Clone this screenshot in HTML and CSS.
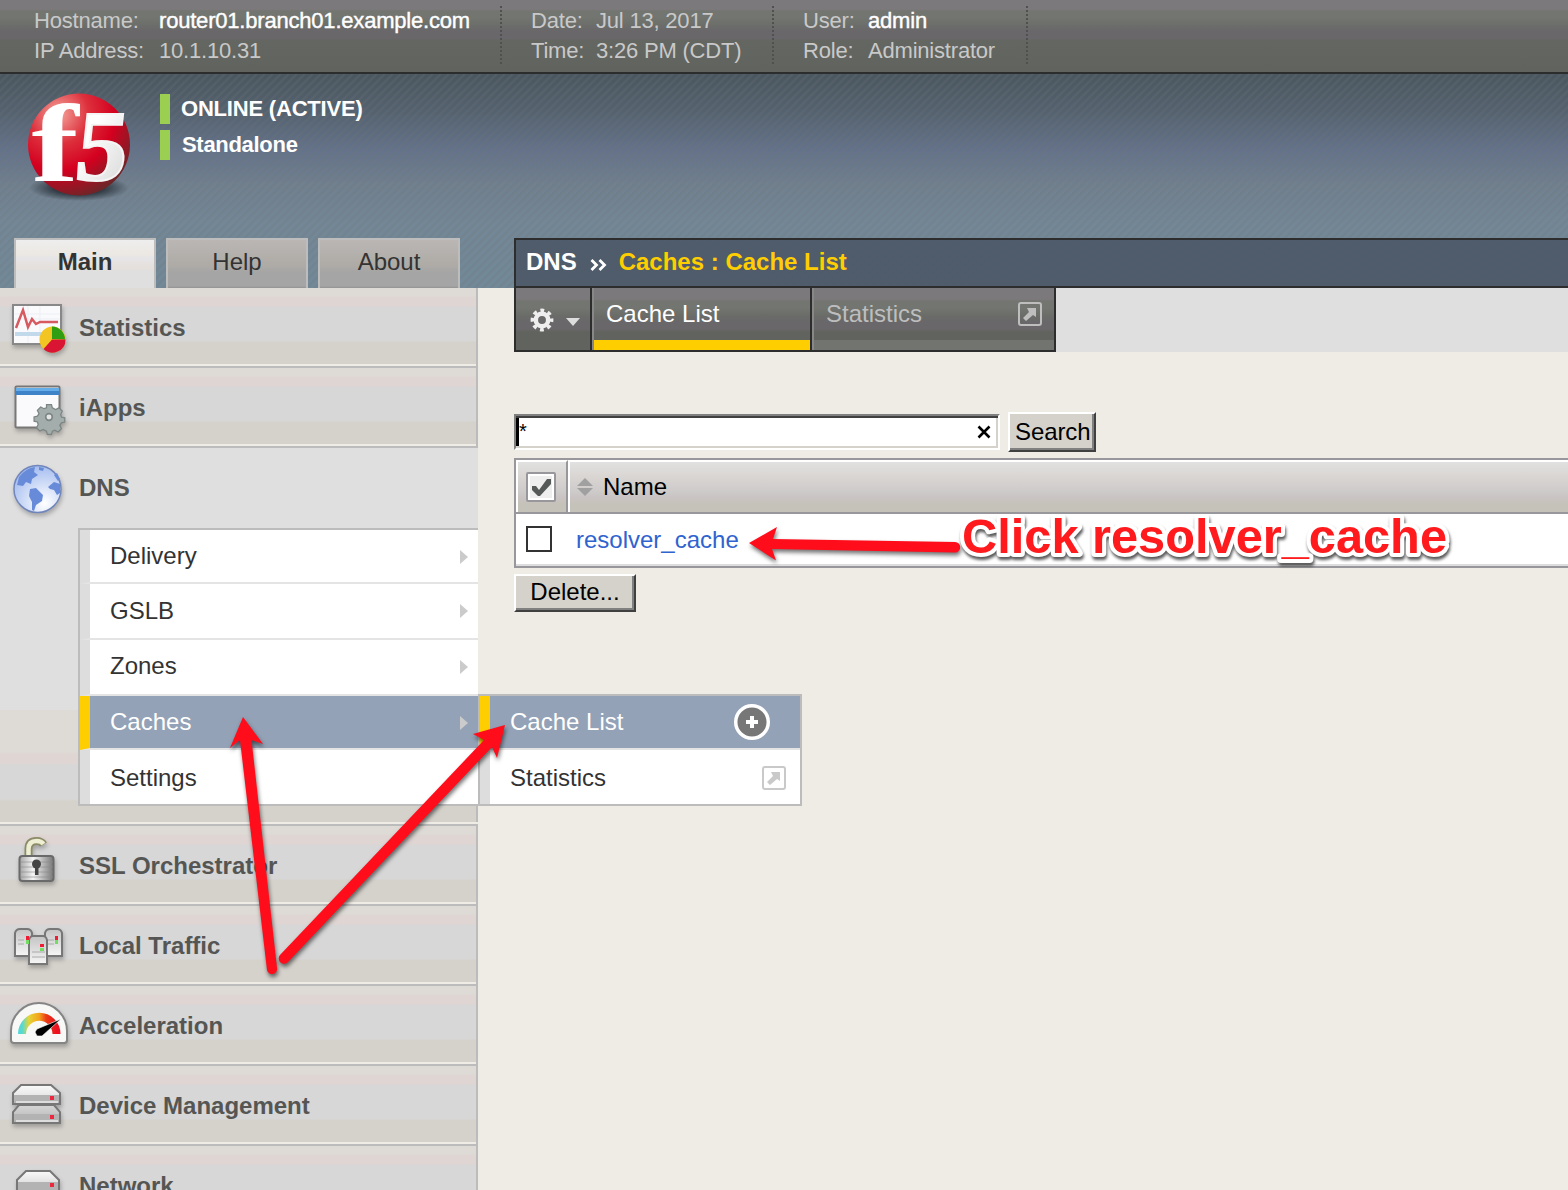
FILE: index.html
```html
<!DOCTYPE html>
<html lang="en">
<head>
<meta charset="utf-8">
<title>Caches : Cache List</title>
<link rel="stylesheet" href="styles.css">
</head>
<body>
<svg width="0" height="0" class="defs">
  <defs>
    <linearGradient id="metal" x1="0" y1="0" x2="0" y2="1"><stop offset="0" stop-color="#fafafa"/><stop offset="1" stop-color="#b5b5b5"/></linearGradient>
    <linearGradient id="server" x1="0" y1="0" x2="0" y2="1"><stop offset="0" stop-color="#c4c4c4"/><stop offset="1" stop-color="#f6f6f6"/></linearGradient>
    <linearGradient id="steel" x1="0" y1="0" x2="1" y2="0"><stop offset="0" stop-color="#a5a5a5"/><stop offset=".4" stop-color="#f5f5f5"/><stop offset="1" stop-color="#777"/></linearGradient>
    <linearGradient id="dial" x1="0" y1="0" x2="1" y2="0"><stop offset="0" stop-color="#55d9d6"/><stop offset=".2" stop-color="#e7d434"/><stop offset=".5" stop-color="#f4a11c"/><stop offset=".7" stop-color="#e93c17"/><stop offset="1" stop-color="#ec1020"/></linearGradient>
    <radialGradient id="ball" cx=".3" cy=".2" r=".85"><stop offset="0" stop-color="#f4a59b"/><stop offset=".35" stop-color="#dd2f3c"/><stop offset=".65" stop-color="#d4001f"/><stop offset="1" stop-color="#6d2528"/></radialGradient>
    <radialGradient id="shade"><stop offset=".5" stop-color="#1c242c" stop-opacity=".75"/><stop offset="1" stop-color="#1c242c" stop-opacity="0"/></radialGradient>
    <radialGradient id="globe" cx=".65" cy=".8" r=".8"><stop offset="0" stop-color="#fff"/><stop offset="1" stop-color="#a5bdf0"/></radialGradient>
    <linearGradient id="five" x1="0" y1="0" x2="1" y2="1"><stop offset=".3" stop-color="#fff"/><stop offset="1" stop-color="#d5d5d5"/></linearGradient>
    <path id="cog" d="M-3-15h6l1 4 4 2 4-2 4 4-2 4 1 3 4 1v5l-4 1-2 3 2 4-4 4-4-2-3 1-1 4h-5l-1-4-4-2-4 2-4-4 2-4-1-3-4-1v-5l4-1 2-3-2-4 4-4 4 2 3-1z"/>
    <g id="popout"><rect x="1" y="1" width="22" height="22" rx="2" fill="none" stroke="currentColor" stroke-width="2"/><path d="M9 6h9v9l-3-2-7 6-3-3 6-6z" fill="currentColor"/></g>
  </defs>
</svg>

<div class="statusbar">
  <dl class="facts host"><dt class="k1">Hostname:</dt><dd class="strong v1">router01.branch01.example.com</dd><dt class="k2">IP Address:</dt><dd class="v2">10.1.10.31</dd></dl>
  <dl class="facts date"><dt>Date:</dt><dd class="d1">Jul 13, 2017</dd><dt>Time:</dt><dd class="d2">3:26 PM (CDT)</dd></dl>
  <dl class="facts user"><dt>User:</dt><dd class="strong">admin</dd><dt>Role:</dt><dd class="r2">Administrator</dd></dl>
</div>

<header class="header">
  <div class="brand">
    <svg class="logo" width="112" height="118" viewBox="23 89 112 118">
      <ellipse cx="79" cy="188" rx="50" ry="13" fill="url(#shade)"/>
      <circle cx="79" cy="144.500" r="51" fill="url(#ball)"/>
      <text class="glyph" transform="translate(31.500 181) scale(1.36 1.05)" font-size="104" fill="#fff">f</text>
      <text class="glyph five" transform="translate(73 180) skewX(-6) scale(1.03 1)" font-size="101" fill="url(#five)">5</text>
    </svg>
    <div class="state">
      <div class="bar"><span class="s1">ONLINE (ACTIVE)</span></div>
      <div class="bar"><span class="s2">Standalone</span></div>
    </div>
  </div>
  <div class="headrow">
    <nav class="tabs"><a class="tab on">Main</a><a class="tab">Help</a><a class="tab">About</a></nav>
    <div class="crumbs"><b class="area">DNS</b><svg width="17" height="14" viewBox="0 0 17 14"><path d="M1.500 2l5 5-5 5M9.500 2l5 5-5 5" fill="none" stroke="#fff" stroke-width="2.800"/></svg><b class="path">Caches : Cache List</b></div>
  </div>
</header>

<div class="body">
  <aside class="side">
    <div class="item"><svg class="ico" viewBox="0 0 78 76">
      <rect x="13" y="17" width="48" height="39" fill="#fafafc" stroke="#888" stroke-width="2"/><path d="M15 26h45M15 31h45M28 18v37M40 18v37" stroke="#eceff4"/><path d="M15 46h45" stroke="#c2d9eb" stroke-width="4"/>
      <path d="M16 40L23 22l5 17 4-8 4 5 4-2h18" fill="none" stroke="#d65a60" stroke-width="2.500"/>
      <circle cx="52.500" cy="51.500" r="13" fill="#f3c522"/><path d="M52 51V38.500a13 13 0 0 1 13 13z" fill="#2f9e13"/><path d="M52 51.500h13.500a13 13 0 0 1-22 9.500z" fill="#d91533"/></svg><span class="n1">Statistics</span></div>
    <div class="item"><svg class="ico" viewBox="0 0 78 76">
      <rect x="15.500" y="18.500" width="44" height="41" rx="1" fill="#fafafc" stroke="#777" stroke-width="2"/><path d="M16 20h43v7H16z" fill="#3e82c7"/><path d="M16 20h43v3H16z" fill="#64ade9"/>
      <g transform="translate(49 49) scale(.83)"><use href="#cog" fill="#a3aeac" stroke="#7a8584" stroke-width="1.500"/><circle r="4" fill="#e5e5e5" stroke="#7a8584" stroke-width="2"/></g></svg><span class="n2">iApps</span></div>

    <div class="item open">
      <div class="itemhead"><svg class="ico" viewBox="0 0 78 76">
        <circle cx="37.500" cy="41" r="23.500" fill="url(#globe)" stroke="#7086bb" stroke-width="1.500"/>
        <path d="M19 29q7-9 16-10l-1 5 4 3-6 4-1 5-5-2-3 4-6-1zM30 41l6-1 7 7-1 6-6 4-2 6-2-1 0-8-3-6zM54 27l3-2 3 6-2 2zM48 39l6-5 6 2 0 9-3 2-3-5-4-1zM39 19l5 1-1 3-4-1z" fill="#688bd9"/></svg><span class="n3">DNS</span></div>
      <ul class="menu">
        <li><span class="m1">Delivery</span><i class="caret"></i></li>
        <li class="l2"><span class="m2">GSLB</span><i class="caret"></i></li>
        <li class="l3"><span class="m3">Zones</span><i class="caret"></i></li>
        <li class="l4 hot"><span class="m4">Caches</span><i class="caret"></i></li>
        <li class="l5"><span class="m5">Settings</span></li>
        <ul class="flyout">
          <li class="f1 hot"><span class="m6">Cache List</span><svg class="plus" width="38" height="38" viewBox="0 0 38 38"><circle cx="19" cy="19" r="16.300" fill="#777" stroke="#fff" stroke-width="3.500"/><path d="M19 13v12M13 19h12" stroke="#fff" stroke-width="4"/></svg></li>
          <li class="f2"><span class="m7">Statistics</span><svg class="pop" width="24" height="24"><use href="#popout"/></svg></li>
        </ul>
      </ul>
    </div>

    <div class="item"><svg class="ico" viewBox="0 0 78 76">
      <path d="M28.500 32V23q0-8 8-8 5 0 7 3.500" fill="none" stroke="#8b8b68" stroke-width="8"/><path d="M28.500 32V23q0-8 8-8 5 0 7 3" fill="none" stroke="#eeeed2" stroke-width="4.500"/>
      <rect x="19.500" y="30" width="34" height="25" rx="3" fill="url(#steel)" stroke="#6a6a6a" stroke-width="2"/><path d="M20 36h33M20 41h33M20 46h33M20 51h33" stroke="#888" opacity=".6"/><circle cx="36.500" cy="38" r="4.500" fill="#444"/><path d="M35 40h3.500v9H35z" fill="#444"/></svg><span class="n4">SSL Orchestrator</span></div>
    <div class="item"><svg class="ico" viewBox="0 0 78 76">
      <g fill="url(#server)" stroke="#777" stroke-width="2"><path d="M15 50V27q1-4 5-4h7q4 0 5 4v23zM45 50V27q1-4 5-4h7q4 0 5 4v23z"/><path d="M29 58V34q1-4 4-4h10q3 0 4 4v24z"/></g>
      <path d="M18 34h6M18 38h6M48 34h6M48 38h6M32 46h13M32 51h13" stroke="#aaa"/><path d="M26 30h3v4h-3zM55 30h3v4h-3zM40 38h4v3h-4z" fill="#ee1c34"/><path d="M26 34h3v4h-3zM55 34h3v4h-3zM40 42h4v3h-4z" fill="#74dc62"/></svg><span class="n5">Local Traffic</span></div>
    <div class="item"><svg class="ico" viewBox="0 0 78 76">
      <path d="M11 45a28 28 0 0 1 56 0v9q0 3-3 3H14q-3 0-3-3z" fill="#f8f8f6" stroke="#858585" stroke-width="2"/>
      <path d="M22 48a17 17 0 0 1 34.500 0" fill="none" stroke="url(#dial)" stroke-width="8"/><path d="M61 33L37 43l-2 3 2 4 5 0z" fill="#000" stroke="#fff" stroke-width=".6"/></svg><span class="n6">Acceleration</span></div>
    <div class="item"><svg class="ico" viewBox="0 0 78 76">
      <g fill="url(#metal)" stroke="#777" stroke-width="2"><path d="M13 57V46l6-7h35l6 7v11zM13 38V27l8-8h30l9 8v11z"/></g><path d="M14 29h45v8H14zM14 48h45v8H14z" fill="#b3b3b3"/><path d="M16 36h42M16 55h42" stroke="#ddd" stroke-width="2"/><path d="M50 30h4v4h-4zM50 49h4v4h-4z" fill="#ee2740"/></svg><span class="n7">Device Management</span></div>
    <div class="item last"><svg class="ico" viewBox="0 0 78 76">
      <path d="M17 57V34l9-9h24l9 9v23z" fill="url(#metal)" stroke="#777" stroke-width="2"/><path d="M18 36h40v20H18z" fill="#b3b3b3"/><path d="M50 37h4v4h-4z" fill="#ee2740"/></svg><span class="n8">Network</span></div>
  </aside>

  <main class="main">
    <div class="toolrow">
      <div class="tools">
        <div class="tool gear"><svg width="26" height="26" viewBox="-13 -13 26 26"><g fill="none" stroke="#eee"><circle r="6.200" stroke-width="4.500"/><circle r="9.600" stroke-width="3.600" stroke-dasharray="3.800 3.740" stroke-dashoffset="1.900"/></g></svg><i class="down"></i></div>
        <div class="tool list on"><span>Cache List</span></div>
        <div class="tool stats"><span>Statistics</span><svg width="24" height="24"><use href="#popout"/></svg></div>
      </div>
    </div>
    <div class="search">
      <div class="field"><i class="cursor"></i><span>*</span><svg width="14" height="14" viewBox="0 0 14 14"><path d="M1.500 1.500l11 11M12.500 1.500l-11 11" stroke="#000" stroke-width="2.600"/></svg></div>
      <button class="btn go">Search</button>
    </div>
    <div class="grid">
      <div class="row head"><div class="cell pick"><svg width="30" height="30" viewBox="0 0 30 30"><rect x="1" y="1" width="28" height="28" rx="1" fill="#fff" stroke="#98989c" stroke-width="2"/><path d="M4 4h22v22H4z" fill="#eee"/><path d="M6 14h4l3 4L21 7h4v5L14 24h-2L6 18z" fill="#555957"/></svg></div>
        <div class="cell name"><svg width="16" height="18" viewBox="0 0 16 18"><path d="M0 8l8-8 8 8zM0 10h16l-8 8z" fill="#a0a0a0"/></svg><span>Name</span></div></div>
      <div class="row data"><i class="box"></i><a>resolver_cache</a></div>
    </div>
    <button class="btn del">Delete...</button>
  </main>
</div>

<svg class="notes" width="1568" height="1190" viewBox="0 0 1568 1190">
  <g class="arrows" fill="#ff0d1b">
    <path d="M749 543L777 527L773 539L955 542A5 5 0 0 1 955 552.500L772 549L776 560.500Z"/>
    <path d="M243 717L263 744L251.500 740L277 968A5 5 0 0 1 267 970L240 740L230 748Z"/>
    <path d="M505 725L497 758L492 747L288 962A5 5 0 0 1 280 955L484 740L473 734Z"/>
  </g>
  <text class="callout" x="962" y="552.500" textLength="485" lengthAdjust="spacingAndGlyphs">Click resolver_cache</text>
</svg>
</body>
</html>
```
FILE: styles.css
```css
* { box-sizing: border-box; }
body {
  margin: 0;
  width: 1568px;
  height: 1190px;
  overflow: hidden;
  position: relative;
  background: #efece6;
  font: 24px/28px "Liberation Sans", Arial, sans-serif;
  color: #333;
}
ul, dl, dd { margin: 0; padding: 0; list-style: none; }
.defs { position: absolute; }
span, b, a, dt, dd { white-space: nowrap; }

/* Status bar */
.statusbar {
  height: 74px;
  display: flex;
  padding-top: 6px;
  border-bottom: 2px solid #2d2d2d;
  background: linear-gradient(#7c797c 0 9px, #737571 11px 17px, #6d6f6b 24px, #69676a 31px 38px, #646661 41px, #61635e);
  color: #c9c9c9;
  font-size: 22px;
  line-height: 30px;
  letter-spacing: -.2px;
}
.facts {
  display: grid;
  grid-template-rows: 30px 30px;
  height: 59px;
  background: repeating-linear-gradient(#50514e 0 2px, transparent 2px 4px) right / 2px 100% no-repeat;
}
.host { width: 502px; padding-left: 34px; grid-template-columns: 125px 1fr; }
.date { width: 272px; padding-left: 29px; grid-template-columns: 65px 1fr; }
.user { width: 254px; padding-left: 29px; grid-template-columns: 65px 1fr; }
.strong { color: #fff; -webkit-text-stroke: .4px #fff; }

/* Header */
.header {
  height: 214px;
  display: flex;
  flex-direction: column;
  justify-content: space-between;
  background:
    repeating-linear-gradient(135deg, rgba(115,115,115,.22) 0 1.2px, transparent 2.2px 4.4px, rgba(115,115,115,.22) 5.657px),
    linear-gradient(#4a5760, #556371 40px, #63728a 75px, #70808f 110px, #738797 150px, #718998);
}
.brand { display: flex; height: 133px; padding: 15px 0 0 23px; gap: 25px; }
.logo { overflow: visible; }
.glyph { font-family: "Liberation Serif", serif; font-weight: bold; }
.five { stroke: #f4f4f4; stroke-width: 2px; }
.state { display: flex; flex-direction: column; gap: 6px; padding-top: 5px; }
.bar { height: 30px; padding-left: 11px; border-left: 10px solid #9bcf52; color: #fff; font: bold 22px/29px "Liberation Sans", Arial, sans-serif; }
.s1 { letter-spacing: -.2px; }
.s2 { padding-left: 1px; letter-spacing: -.3px; }
.headrow { display: flex; height: 50px; gap: 54px; padding-left: 14px; }
.tabs { display: flex; gap: 10px; }
.tab {
  width: 142px;
  padding-top: 8px;
  border: 2px solid #bdbdbd;
  border-bottom: 0;
  text-align: center;
  line-height: 28px;
  color: #333;
  background: linear-gradient(#bbb6b4, #aeaba7 26px, #a5a5a5 32px 46px, #939393 48px);
}
.tab.on { font-weight: bold; background: linear-gradient(#eee, #ece8e3 14px, #e6e5e7 18px, #e5e0db 28px, #dfdfdf 32px); }
.crumbs {
  flex: 1;
  display: flex;
  padding: 8px 0 0 10px;
  border: 2px solid #2d2d2d;
  border-right: 0;
  background: repeating-linear-gradient(135deg, #515b69 0 2px, #4e5c6b 3px 5.657px);
  color: #fff;
}
.crumbs svg { margin: 10px 12px 0 13px; }
.path { color: #ffce00; }

/* Sidebar */
.body { display: flex; height: 902px; }
.side { width: 478px; flex: none; overflow: visible; }
.item {
  display: flex;
  height: 80px;
  padding-bottom: 4px;
  border-right: 2px solid #bcbcbc;
  background:
    linear-gradient(transparent 76px, #efece6 76px 78px, #bcbcbc 78px),
    linear-gradient(#dedbd6 0 8px, #dfd6d4 9px 18px, #d7d7d7 19px 53px, #d5d2cc 54px);
  font-weight: bold;
  line-height: 80px;
  color: #555654;
}
.ico { width: 78px; height: 76px; flex: none; filter: drop-shadow(1px 3px 2px rgba(0,0,0,.25)); }
.item span { padding-left: 1px; }
.item.open {
  display: block;
  height: 378px;
  padding: 0;
  border-right: 0;
  background:
    linear-gradient(transparent 374px, #efece6 374px 376px, #bcbcbc 376px),
    linear-gradient(#bcbcbc, #bcbcbc) right bottom / 2px 20px no-repeat,
    linear-gradient(#dfdfdf 0 262px, #dedad5 262px 304px, #dfd6d4 306px 315px, #d7d7d7 317px 351px, #d5d2cc 353px);
}
.itemhead { display: flex; height: 80px; }
.menu {
  position: relative;
  width: 400px;
  height: 278px;
  margin-left: 78px;
  border: 2px solid #bcbcbc;
  border-right: 0;
  background: #fff;
  color: #333;
  font-weight: normal;
  line-height: 52px;
}
.menu li {
  display: flex;
  justify-content: space-between;
  align-items: flex-start;
  height: 54px;
  border-left: 10px solid #ddd;
  border-bottom: 2px solid #e4e4e4;
  padding: 0 10px 0 19px;
}
.menu .l2, .menu .l3 { height: 56px; }
.menu .l2 span { line-height: 54px; }
.menu .l5 { height: 54px; border-bottom: 0; }
.menu .l5 span, .menu .f2 span { line-height: 55px; }
.menu .hot { border-left-color: #ffce00; background: #93a2b6; color: #fff; }
.caret { margin-top: 20px; border: 7px solid transparent; border-left: 8px solid #cbcbcb; border-right: 0; }
.flyout {
  position: absolute;
  left: 398px;
  top: 164px;
  width: 324px;
  height: 112px;
  border: 2px solid #bcbcbc;
  background: #fff;
}
.flyout .f2 { border-bottom: 0; padding-right: 14px; }
.flyout .f1 { padding-right: 29px; }
.plus { margin-top: 7px; }
.pop { margin-top: 16px; color: #c9c9c9; }

/* Content */
.main { flex: 1; padding-left: 36px; }
.toolrow { height: 64px; background: #dfdfdf; }
.tools { display: flex; width: 542px; height: 64px; border: solid #2d2d2d; border-width: 0 2px 2px; }
.tool {
  display: flex;
  border-right: 2px solid #2d2d2d;
  background: linear-gradient(#7c797c 0 11px, #737571 13px 20px, #6b6d69 27px, #69676a 34px 41px, #61635e 44px);
}
.gear { width: 76px; padding: 19px 0 0 13px; gap: 11px; }
.down { height: 8px; margin-top: 11px; border: 7px solid transparent; border-top: 8px solid #ddd; border-bottom: 0; }
.list { width: 220px; border-left: 2px solid #888; padding: 12px 0 0 12px; color: #fff; box-shadow: inset 0 -10px #ffce00; }
.stats { width: 242px; justify-content: space-between; border-left: 2px solid #888; border-right: 0; padding: 12px 12px 0; color: #bebebe; box-shadow: inset 0 -10px #727470; }
.stats svg { margin-top: 2px; }
.search { display: flex; gap: 8px; margin-top: 60px; height: 40px; }
.field {
  display: flex;
  align-items: flex-start;
  width: 486px;
  height: 36px;
  margin-top: 2px;
  background: #fff;
  border: 2px solid;
  border-color: #808080 #fff #fff #808080;
  box-shadow: inset 0 2px #404040, inset -2px -2px #d5d2cb;
  color: #000;
}
.cursor { width: 3px; height: 28px; margin-top: 2px; background: #000; }
.field span { flex: 1; font-size: 20px; line-height: 28px; margin: 1px 0 0 0; }
.field svg { margin: 9px 7px 0 0; }
.btn {
  padding: 0;
  border: 2px solid;
  border-color: #fff #404040 #404040 #fff;
  background: #d5d2cb;
  box-shadow: inset -2px -2px #808080;
  font: 24px/28px "Liberation Sans", Arial, sans-serif;
  color: #000;
  white-space: nowrap;
  display: block;
}
.go { width: 88px; height: 40px; text-align: left; padding-left: 5px; overflow: hidden; letter-spacing: -.1px; }
.grid { margin-top: 6px; height: 110px; border: 2px solid #98989c; border-right: 0; background: #fff; color: #000; box-shadow: inset 0 -2px #ddd; }
.row { display: flex; }
.head { height: 54px; border-bottom: 2px solid #98989c; }
.cell { border: solid #fff; border-width: 2px 0 0 2px; background: linear-gradient(#e1e1e1, #d9d5d2 15px, #cdcaca 30px, #c9c3c2 36px, #c5c2b9 42px); }
.pick { width: 52px; border-right: 2px solid #98989c; padding: 10px 0 0 8px; }
.name { flex: 1; display: flex; padding: 11px 0 0 7px; gap: 10px; }
.name svg { margin-top: 5px; }
.data { padding: 12px 0 0 10px; gap: 24px; }
.box { width: 26px; height: 26px; border: 2px solid #333; }
.data a { color: #2f63cf; }
.del { width: 122px; height: 38px; margin-top: 6px; padding-bottom: 2px; }

/* Annotations over the page */
.notes { position: absolute; left: 0; top: 0; pointer-events: none; }
.arrows { filter: drop-shadow(1px 3px 2px rgba(0,0,0,.55)); }
.callout {
  font: bold 48px "Liberation Sans", Arial, sans-serif;
  fill: #ff1a1d;
  stroke: #fff;
  stroke-width: 8px;
  stroke-linejoin: round;
  paint-order: stroke;
  filter: drop-shadow(1px 3px 1.5px rgba(0,0,0,.65));
}
```
